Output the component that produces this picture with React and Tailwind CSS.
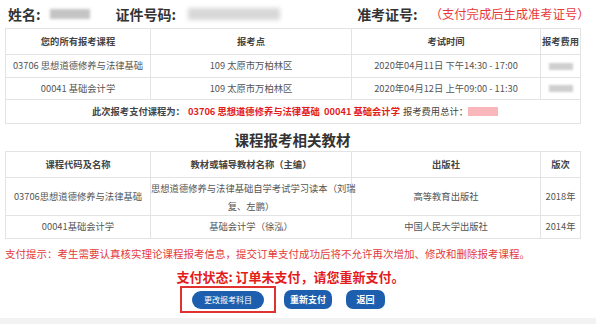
export default function App() {
  const font = { fontFamily: '"Microsoft YaHei","Noto Sans CJK SC",sans-serif' };
  const th = "border border-[#e3e3e3] font-bold text-[9.3px] text-[#444] text-center px-0 whitespace-nowrap";
  const td = "border border-[#e3e3e3] text-[9.3px] text-[#555] text-center px-0 whitespace-nowrap";
  return (
    <div className="w-[596px] h-[324px] bg-white overflow-hidden relative" style={font}>
      <div className="pl-[5px] pr-[16px]">
        <div className="h-[28px] flex items-center text-[14px] font-bold text-[#333] whitespace-nowrap">
          <span className="ml-[3px] shrink-0">姓名:</span>
          <span className="ml-[9px] shrink-0 w-[40px] h-[10px] bg-[#c4c4c4] blur-[1.5px]"></span>
          <span className="ml-[26px] shrink-0">证件号码:</span>
          <span className="ml-[12px] shrink-0 w-[92px] h-[12px] bg-[#d8d8d8] blur-[2px]"></span>
          <span className="ml-[77px] shrink-0">准考证号:</span>
          <span className="ml-[12px] shrink-0 font-normal text-[#e83a3a] text-[12.3px]">（支付完成后生成准考证号）</span>
        </div>
        <table className="w-[575px] border-collapse table-fixed">
          <colgroup>
            <col className="w-[145px]" />
            <col className="w-[201px]" />
            <col className="w-[189px]" />
            <col className="w-[40px]" />
          </colgroup>
          <tbody>
            <tr className="h-[26px]">
              <td className={th}>您的所有报考课程</td>
              <td className={th}>报考点</td>
              <td className={th}>考试时间</td>
              <td className={th}>报考费用</td>
            </tr>
            <tr className="h-[23px]">
              <td className={td}>03706 思想道德修养与法律基础</td>
              <td className={td}>109 太原市万柏林区</td>
              <td className={td}>2020年04月11日 下午14:30 - 17:00</td>
              <td className={td}><div className="mx-auto w-[24px] h-[7px] bg-[#cfcfcf] blur-[1px]"></div></td>
            </tr>
            <tr className="h-[22px]">
              <td className={td}>00041 基础会计学</td>
              <td className={td}>109 太原市万柏林区</td>
              <td className={td}>2020年04月12日 上午09:00 - 11:30</td>
              <td className={td}><div className="mx-auto w-[24px] h-[7px] bg-[#cfcfcf] blur-[1px]"></div></td>
            </tr>
            <tr className="h-[24px]">
              <td colSpan={4} className="border border-[#e3e3e3] text-[9.3px]">
                <div className="flex items-center justify-center font-bold text-[#444] pl-[4px] whitespace-nowrap">
                  <span>此次报考支付课程为：</span>
                  <span className="ml-[3px] text-[#e31b1b]">03706 思想道德修养与法律基础&nbsp;&nbsp;00041 基础会计学</span>
                  <span className="ml-[3px] font-normal">报考费用总计：</span>
                  <span className="w-[30px] h-[9px] bg-[#f9b6bb] blur-[0.5px]"></span>
                </div>
              </td>
            </tr>
          </tbody>
        </table>
        <div className="h-[27px] flex items-center justify-center text-[14.5px] font-bold text-[#333] pt-[5px]">课程报考相关教材</div>
        <table className="w-[575px] border-collapse table-fixed">
          <colgroup>
            <col className="w-[145px]" />
            <col className="w-[201px]" />
            <col className="w-[189px]" />
            <col className="w-[40px]" />
          </colgroup>
          <tbody>
            <tr className="h-[26px]">
              <td className={th}>课程代码及名称</td>
              <td className={th}>教材或辅导教材名称（主编）</td>
              <td className={th}>出版社</td>
              <td className={th}>版次</td>
            </tr>
            <tr className="h-[38px]">
              <td className={td}>03706思想道德修养与法律基础</td>
              <td className={`${td} leading-[18px]`}>思想道德修养与法律基础自学考试学习读本（刘瑞<br />复、左鹏）</td>
              <td className={td}>高等教育出版社</td>
              <td className={td}>2018年</td>
            </tr>
            <tr className="h-[23px]">
              <td className={td}>00041基础会计学</td>
              <td className={td}>基础会计学（徐泓）</td>
              <td className={td}>中国人民大学出版社</td>
              <td className={td}>2014年</td>
            </tr>
          </tbody>
        </table>
        <div className="mt-[8px] text-[10.5px] text-[#e23a3a] leading-[14px] whitespace-nowrap">支付提示：考生需要认真核实理论课程报考信息，提交订单支付成功后将不允许再次增加、修改和删除报考课程。</div>
        <div className="mt-[7px] text-center text-[13px] font-bold text-[#e31b1b] leading-[18px] pr-[4px]">支付状态: 订单未支付，请您重新支付。</div>
        <div className="mt-[0px] flex items-start justify-center pr-[20px]">
          <div className="w-[96px] h-[27px] border-2 border-[#e0322f] flex items-center justify-center">
            <button className="w-[72px] h-[18px] rounded-full bg-[#1d5fae] text-white text-[8px] font-normal">更改报考科目</button>
          </div>
          <button className="ml-[8px] mt-[4px] w-[48px] h-[19px] rounded-[7px] bg-[#1d5fae] text-white text-[9px] font-bold">重新支付</button>
          <button className="ml-[14px] mt-[4px] w-[39px] h-[19px] rounded-[7px] bg-[#1d5fae] text-white text-[9px] font-bold">返回</button>
        </div>
      </div>
      <div className="absolute left-0 right-0 bottom-0 h-[6px] bg-[#f2f2f2]"></div>
    </div>
  );
}
